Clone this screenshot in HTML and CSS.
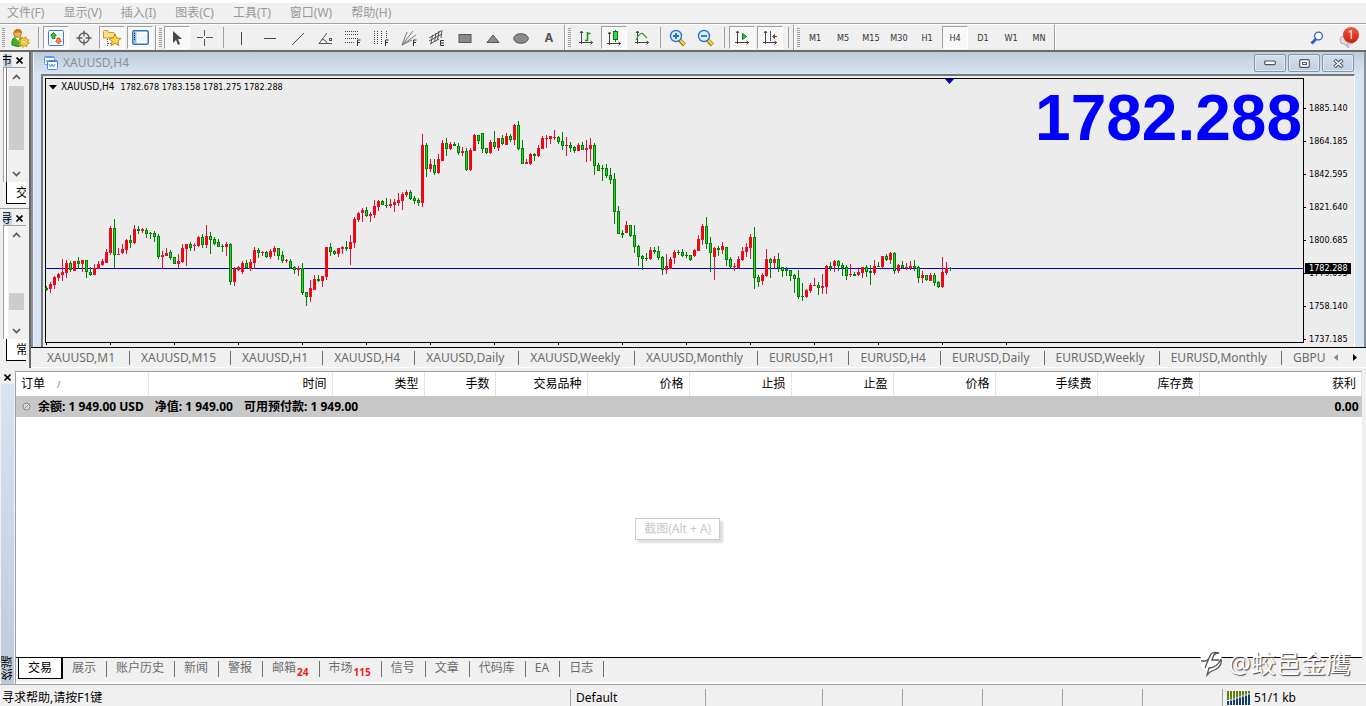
FILE: index.html
```html
<!DOCTYPE html>
<html lang="zh-CN">
<head>
<meta charset="utf-8">
<title>XAUUSD,H4</title>
<link rel="stylesheet" href="styles.css">
</head>
<body>
<nav class="menubar">
  <button>文件(F)</button><button>显示(V)</button><button>插入(I)</button><button>图表(C)</button><button>工具(T)</button><button>窗口(W)</button><button>帮助(H)</button>
</nav>

<header class="toolbar">
  <div class="group">
    <i class="grip"></i>
    <button class="tool" aria-label="新账户"><svg width="20" height="20" viewBox="0 0 20 20"><path d="M2 17q-1-8 5-8t6 5v3q-5 3-11 0z" fill="#3fae2a" stroke="#2a8a18"/><path d="M5 9l3 4 2-4z" fill="#fff"/><circle cx="7.500" cy="5.500" r="3.800" fill="#f2b84b" stroke="#b87416"/><path d="M4 5q0-4 4-4t4 4q-4-1-8 0z" fill="#c47a1c"/><circle cx="14" cy="14" r="4" fill="#f7d84a" stroke="#c99a12"/><circle cx="14" cy="14" r="4.700" fill="none" stroke="#dcae20" stroke-width="2" stroke-dasharray="2 1.700"/><circle cx="14" cy="14" r="1.500" fill="#fff" stroke="#b8860b" stroke-width=".6"/></svg></button>
    <i class="sep"></i>
    <button class="tool on" aria-label="市场报价"><svg width="16" height="16" viewBox="0 0 16 16"><rect x=".5" y=".5" width="15" height="15" rx="1" fill="#fff" stroke="#3b7fc4"/><path d="M9 4h5M10 6h4M2 10h4M2 12h5" stroke="#cfe2f5"/><path d="M5.500 2.500l3 3H7v3H4v-3H2.500z" fill="#3fc046" stroke="#0b7a16" stroke-width=".8"/><path d="M10.500 14l-3-3H9V8h3v3h1.500z" fill="#f58a5a" stroke="#cc3f10" stroke-width=".8"/></svg></button>
    <button class="tool" aria-label="数据窗口"><svg width="16" height="16" viewBox="0 0 16 16"><g fill="none" stroke="#5c5c5c" stroke-width="1.300"><circle cx="8" cy="8" r="5"/><path d="M8 .5v6M8 9.500v6M.5 8h6M9.500 8h6"/></g></svg></button>
    <button class="tool on" aria-label="导航"><svg width="20" height="18" viewBox="0 0 20 18"><path d="M1.500 9V2.500q0-1 1-1h3l1 2h5q1 0 1 1V9z" fill="#f9e08a" stroke="#c9981c"/><path d="M5.500 10v7M6 14.500h4" stroke="#444" stroke-dasharray="1 1"/><path d="M13 5l1.800 4 4.200.4-3.200 2.900 1 4.200-3.800-2.200-3.800 2.200 1-4.200L7 9.400l4.200-.4z" fill="#ffd94d" stroke="#b8860b"/></svg></button>
    <button class="tool on" aria-label="终端"><svg width="17" height="15" viewBox="0 0 17 15"><rect x=".8" y=".8" width="15.400" height="13.400" rx="1.500" fill="#fff" stroke="#2e6fb8" stroke-width="1.500"/><rect x="2" y="2" width="2.500" height="11" fill="#8cbcf0"/><path d="M2.500 3v8" stroke="#123" stroke-dasharray="1 1"/><path d="M6 4h9M6 6h9M6 8h9M6 10h9" stroke="#dfeafa"/></svg></button>
  </div>
  <div class="group">
    <i class="grip"></i>
    <button class="tool on" aria-label="光标"><svg width="12" height="16" viewBox="0 0 12 16"><path d="M2 1v12l3-3 2 5 2-1-2-5h4z" fill="#4a4a4a"/></svg></button>
    <button class="tool" aria-label="十字准线"><svg width="16" height="16" viewBox="0 0 16 16"><path d="M7.500 0v6M7.500 9v7M0 7.500h6M9 7.500h7" stroke="#555"/></svg></button>
    <i class="sep"></i>
    <button class="tool" aria-label="垂直线"><svg width="16" height="16" viewBox="0 0 16 16"><path d="M8.500 2v13" stroke="#444"/></svg></button>
    <button class="tool" aria-label="水平线"><svg width="16" height="16" viewBox="0 0 16 16"><path d="M3 8.500h12" stroke="#444"/></svg></button>
    <button class="tool" aria-label="趋势线"><svg width="16" height="16" viewBox="0 0 16 16"><path d="M3 15L15 3" stroke="#555"/></svg></button>
    <button class="tool" aria-label="角度线"><svg width="16" height="16" viewBox="0 0 16 16"><path d="M10 3L2 13.500h13M5 9q4 1 5 4" fill="none" stroke="#555"/><rect x="12.500" y="8.500" width="2" height="2" fill="none" stroke="#555"/></svg></button>
    <button class="tool" aria-label="斐波那契回调"><svg width="16" height="18" viewBox="0 0 16 18"><path d="M0 2.500h14M0 5.500h14M0 9.500h14M0 13.500h10" stroke="#444" stroke-dasharray="1 1"/><path d="M12.500 17v-6h3M12 13.500h3" fill="none" stroke="#333"/></svg></button>
    <button class="tool" aria-label="斐波那契时区"><svg width="16" height="18" viewBox="0 0 16 18"><path d="M1.500 2v14M4.500 2v14M8.500 2v14M13.500 2v8" stroke="#444" stroke-dasharray="1 1"/><path d="M12.500 17v-6h3M12 13.500h3" fill="none" stroke="#333"/></svg></button>
    <button class="tool" aria-label="斐波那契扇形"><svg width="16" height="18" viewBox="0 0 16 18"><path d="M1 16L6 3M1 16L12 2M1 16L15 6M1 16L11 11" stroke="#777"/><path d="M12.500 17v-6h3M12 13.500h3" fill="none" stroke="#333"/></svg></button>
    <button class="tool" aria-label="等距通道"><svg width="18" height="18" viewBox="0 0 18 18"><path d="M1 9L13 2M1 12L14 5M2 15L11 10M4.500 6L3 15M8 4L6.500 13M11 2L9.500 11M14 1L13 9" stroke="#555"/><path d="M16 11.500h-3.500v5H16M13 14h3" fill="none" stroke="#333"/></svg></button>
    <button class="tool" aria-label="矩形"><svg width="16" height="16" viewBox="0 0 16 16"><rect x="2" y="4.500" width="12" height="8" fill="#8a8a8a" stroke="#555"/></svg></button>
    <button class="tool" aria-label="三角形"><svg width="16" height="16" viewBox="0 0 16 16"><path d="M2 12.500h12L8 5z" fill="#8a8a8a" stroke="#555"/></svg></button>
    <button class="tool" aria-label="椭圆"><svg width="18" height="16" viewBox="0 0 18 16"><ellipse cx="9" cy="8.500" rx="7.300" ry="4.800" fill="#8a8a8a" stroke="#555"/></svg></button>
    <button class="tool letter">A</button>
  </div>
  <div class="group">
    <i class="grip"></i>
    <button class="tool" aria-label="柱状图"><svg width="16" height="16" viewBox="0 0 16 16"><path d="M3.500 1v13M1 12.500h14M2 3l1.500-2L5 3M12.500 11l2 1.500-2 2" fill="none" stroke="#444"/><path d="M7 10.500h2.500V2M9.500 3.500h3" fill="none" stroke="#129a18" stroke-width="1.600"/></svg></button>
    <button class="tool on" aria-label="蜡烛图"><svg width="16" height="18" viewBox="0 0 16 18"><path d="M3.500 3v13M1 14.500h14M2 5l1.500-2L5 5M12.500 13l2 1.500-2 2" fill="none" stroke="#444"/><path d="M9.500 1v12" stroke="#087c10"/><rect x="7.500" y="2.500" width="4" height="8" fill="#39d746" stroke="#087c10"/></svg></button>
    <button class="tool" aria-label="折线图"><svg width="16" height="16" viewBox="0 0 16 16"><path d="M3.500 1v13M1 12.500h14M2 3l1.500-2L5 3M12.500 11l2 1.500-2 2" fill="none" stroke="#444"/><path d="M2 10Q7 0 10 5l3 3" fill="none" stroke="#3a9a40" stroke-width="1.300"/></svg></button>
    <i class="sep"></i>
    <button class="tool" aria-label="放大"><svg width="18" height="18" viewBox="0 0 18 18"><path d="M10.500 11l5 5" stroke="#a87a10" stroke-width="4"/><path d="M11 11l4.500 4.500" stroke="#f6dc48" stroke-width="2"/><circle cx="7" cy="7" r="5.500" fill="#d8efff" stroke="#2f78bd" stroke-width="1.400"/><path d="M4 7h6M7 4v6" stroke="#2573b5" stroke-width="1.800"/></svg></button>
    <button class="tool" aria-label="缩小"><svg width="18" height="18" viewBox="0 0 18 18"><path d="M10.500 11l5 5" stroke="#a87a10" stroke-width="4"/><path d="M11 11l4.500 4.500" stroke="#f6dc48" stroke-width="2"/><circle cx="7" cy="7" r="5.500" fill="#d8efff" stroke="#2f78bd" stroke-width="1.400"/><path d="M4 7h6" stroke="#2573b5" stroke-width="1.800"/></svg></button>
    <i class="sep"></i>
    <button class="tool on" aria-label="自动滚动"><svg width="16" height="16" viewBox="0 0 16 16"><path d="M3.500 1v13M1 12.500h14M2 3l1.500-2L5 3M12.500 11l2 1.500-2 2" fill="none" stroke="#444"/><path d="M8.500 3.500v6l4-3z" fill="#35c840" stroke="#0c7a14"/></svg></button>
    <button class="tool on" aria-label="图表平移"><svg width="16" height="16" viewBox="0 0 16 16"><path d="M3.500 1v13M1 12.500h14M2 3l1.500-2L5 3M12.500 11l2 1.500-2 2" fill="none" stroke="#444"/><path d="M8.500 1v10" stroke="#1c66a8"/><path d="M15 6.500h-4M12.500 4.500l-2 2 2 2z" fill="#a63310" stroke="#a63310"/></svg></button>
    <i class="sep"></i>
  </div>
  <div class="group">
    <i class="grip"></i>
    <button class="tool">M1</button><button class="tool">M5</button><button class="tool">M15</button><button class="tool">M30</button><button class="tool">H1</button><button class="tool on">H4</button><button class="tool">D1</button><button class="tool">W1</button><button class="tool">MN</button>
  </div>
  <div class="toolbar-end">
    <button class="tool" aria-label="搜索"><svg width="14" height="14" viewBox="0 0 14 14"><path d="M6 8L1.500 12.500" stroke="#2f63c9" stroke-width="3"/><circle cx="8.500" cy="5" r="3.900" fill="#fff" stroke="#2f63c9" stroke-width="1.300"/></svg></button>
    <button class="tool chat" aria-label="消息"><svg width="16" height="14" viewBox="0 0 16 14"><path d="M6 2h6q3 0 3 4t-3 4H8l2 4-5-4Q1 10 1 6t5-4z" fill="#dcdce0" stroke="#aaa"/></svg><span class="badge">1</span></button>
  </div>
</header>

<main class="workspace">
  <aside class="docks">
    <section class="dock">
      <div class="dock-head"><span class="dock-title">市</span><button class="close" aria-label="关闭"><svg width="7" height="7" viewBox="0 0 7 7"><path d="M.5.5l6 6M6.500.5l-6 6" stroke="#000" stroke-width="1.600"/></svg></button></div>
      <div class="dock-body marked">
        <div class="scroll"><svg class="chev" width="9" height="6" viewBox="0 0 9 6"><path d="M1 5l3.500-3.500L8 5" fill="none" stroke="#555" stroke-width="1.600"/></svg><i class="thumb tall"></i><svg class="chev" width="9" height="6" viewBox="0 0 9 6"><path d="M1 1l3.500 3.500L8 1" fill="none" stroke="#555" stroke-width="1.600"/></svg></div>
      </div>
      <div class="dock-tab">交</div>
    </section>
    <section class="dock">
      <div class="dock-head"><span class="dock-title">导</span><button class="close" aria-label="关闭"><svg width="7" height="7" viewBox="0 0 7 7"><path d="M.5.5l6 6M6.500.5l-6 6" stroke="#000" stroke-width="1.600"/></svg></button></div>
      <div class="dock-body">
        <div class="scroll"><svg class="chev" width="9" height="6" viewBox="0 0 9 6"><path d="M1 5l3.500-3.500L8 5" fill="none" stroke="#555" stroke-width="1.600"/></svg><i class="thumb low"></i><svg class="chev" width="9" height="6" viewBox="0 0 9 6"><path d="M1 1l3.500 3.500L8 1" fill="none" stroke="#555" stroke-width="1.600"/></svg></div>
      </div>
      <div class="dock-tab">常</div>
    </section>
  </aside>
  <div class="charts">
    <section class="mdi">
      <div class="window">
        <div class="titlebar">
          <svg width="14" height="14" viewBox="0 0 14 14"><rect x=".5" y=".5" width="10" height="8" rx="1" fill="#fff" stroke="#5b9ae6"/><path d="M1 1.500h9" stroke="#5b9ae6"/><path d="M2 6l1.500-2 1.500 2 1.500-2" fill="none" stroke="#5b9ae6"/><rect x="3.500" y="4.500" width="10" height="9" rx="1" fill="#fff" stroke="#3f86dc"/><path d="M4 5.500h9" stroke="#3f86dc"/><path d="M5 8l1.500 3L8 8l1.500 3L11 8" fill="none" stroke="#3f86dc"/></svg>
          <span class="title">XAUUSD,H4</span>
          <button class="winbtn" aria-label="最小化"><svg width="12" height="6" viewBox="0 0 12 6"><rect x=".7" y="1" width="10.600" height="3.600" rx="1" fill="#fff" stroke="#4c5666" stroke-width="1.200"/></svg></button>
          <button class="winbtn" aria-label="还原"><svg width="11" height="9" viewBox="0 0 11 9"><rect x=".7" y=".7" width="9.600" height="7.600" rx="1" fill="#fff" stroke="#4c5666" stroke-width="1.200"/><rect x="3.500" y="3.500" width="4" height="2" fill="none" stroke="#4c5666"/></svg></button>
          <button class="winbtn" aria-label="关闭窗口"><svg width="11" height="9" viewBox="0 0 11 9"><path d="M1.500 1l8 7M9.500 1l-8 7" stroke="#4c5666" stroke-width="3.600"/><path d="M2 1.500l7 6M9 1.500l-7 6" stroke="#fff" stroke-width="1.600"/></svg></button>
        </div>
        <div class="view">
          <div class="plot">
            <svg class="candles" id="candles"></svg>
            <div class="quote"><svg width="8" height="5" viewBox="0 0 8 5"><path d="M0 0h8L4 4.500z"/></svg><span class="symbol">XAUUSD,H4</span><span>1782.678 1783.158 1781.275 1782.288</span></div>
            <div class="price">1782.288</div>
          </div>
          <div class="axis">
            <span>1885.140</span><span>1864.185</span><span>1842.595</span><span>1821.640</span><span>1800.685</span><span>1779.095</span><span>1758.140</span><span>1737.185</span>
            <b class="tag">1782.288</b>
          </div>
        </div>
      </div>
    </section>
    <nav class="chart-tabs">
      <div class="strip">
        <button>XAUUSD,M1</button><button>XAUUSD,M15</button><button>XAUUSD,H1</button><button>XAUUSD,H4</button><button>XAUUSD,Daily</button><button>XAUUSD,Weekly</button><button>XAUUSD,Monthly</button><button>EURUSD,H1</button><button>EURUSD,H4</button><button>EURUSD,Daily</button><button>EURUSD,Weekly</button><button>EURUSD,Monthly</button><button>GBPU</button>
      </div>
      <button class="arrow" aria-label="向左"><svg width="4" height="7" viewBox="0 0 4 7"><path d="M4 0v7L0 3.500z" fill="#888"/></svg></button>
      <button class="arrow" aria-label="向右"><svg width="4" height="7" viewBox="0 0 4 7"><path d="M0 0v7l4-3.500z" fill="#000"/></svg></button>
    </nav>
  </div>
</main>

<section class="terminal">
  <div class="side">
    <button class="close" aria-label="关闭终端"><svg width="7" height="7" viewBox="0 0 7 7"><path d="M.5.5l6 6M6.500.5l-6 6" stroke="#000" stroke-width="1.600"/></svg></button>
    <div class="side-title"><span>终端</span></div>
  </div>
  <div class="panel">
    <div class="sheet">
      <table class="orders">
        <colgroup><col class="c-order"><col class="c-time"><col class="c-type"><col class="c-lots"><col class="c-type"><col class="c-num"><col class="c-num"><col class="c-num"><col class="c-num"><col class="c-num"><col class="c-num"><col></colgroup>
        <thead><tr><th class="first">订单<span class="sort">/</span></th><th>时间</th><th>类型</th><th>手数</th><th>交易品种</th><th>价格</th><th>止损</th><th>止盈</th><th>价格</th><th>手续费</th><th>库存费</th><th>获利</th></tr></thead>
        <tbody><tr><td colspan="11"><div class="balance"><svg width="9" height="9" viewBox="0 0 9 9"><circle cx="4.500" cy="4.500" r="3.500" fill="#ddd" stroke="#888"/><path d="M2.500 6.500l4-4" stroke="#888"/></svg><span>余额: 1 949.00 USD</span><span>净值: 1 949.00</span><span>可用预付款: 1 949.00</span></div></td><td class="profit">0.00</td></tr></tbody>
      </table>
      <div class="hint">截图(Alt + A)</div>
    </div>
    <nav class="term-tabs">
      <button class="active">交易</button><button>展示</button><button>账户历史</button><button>新闻</button><button>警报</button><button>邮箱<sub>24</sub></button><button>市场<sub>115</sub></button><button>信号</button><button>文章</button><button>代码库</button><button>EA</button><button>日志</button>
    </nav>
  </div>
  <div class="watermark"><svg width="26" height="28" viewBox="0 0 26 28"><circle cx="13" cy="12" r="11" fill="#fff"/><path d="M3 12h4q3 0 5-5 2-5 9-3-5 0-6 4l-1 3h7M7 19l4-10M23 10q2 9-11 13l-3 3 2-7q8 0 12-9" fill="none" stroke="#555" stroke-width="1.300"/></svg><span>@蛟邑金鹰</span></div>
</section>

<footer class="status">
  <span class="help">寻求帮助,请按F1键</span>
  <span class="s1">Default</span><span class="s2"></span><span class="s3"></span><span class="s3"></span><span class="s3"></span><span class="s3"></span><span class="s3"></span>
  <span class="net"><svg width="24" height="14" viewBox="0 0 24 14"><path d="M1 0v9M4 0v8.500M7 0v7.500M10 0v6.500M13 0v5.500M16 0v4.500M19 0v3.500M22 0v2.500" stroke="#657c10" stroke-width="2"/><path d="M1 14v-4M4 14v-4.500M7 14v-5.500M10 14V7.500M13 14V6.500M16 14V5.500M19 14V4.500M22 14V3.500" stroke="#123f63" stroke-width="2"/></svg>51/1 kb</span>
</footer>
<script src="chart.js"></script>
</body>
</html>
```

FILE: styles.css
```css
* { box-sizing: border-box; }
body {
  margin: 0;
  height: 100vh;
  display: flex;
  flex-direction: column;
  overflow: hidden;
  background: #f0f0f0;
  border-top: 3px solid #fff;
  font: 12px/16px "Noto Sans", "Noto Sans CJK SC", sans-serif;
  color: #000;
}
button {
  font: inherit;
  color: inherit;
  background: none;
  border: 0;
  padding: 0;
  margin: 0;
}
svg { display: block; flex: none; }

.menubar {
  display: flex;
  height: 21px;
  flex: none;
  border-bottom: 1px solid #a0a0a0;
  color: #999;
}
.menubar button { padding: 0 12px 0 7px; }

.toolbar {
  display: flex;
  flex: none;
  height: 28px;
  border-top: 1px solid #fff;
  border-bottom: 2px solid #696969;
}
.group {
  display: flex;
  gap: 2px;
  align-items: center;
  padding: 0 2px;
  border-right: 1px solid #a0a0a0;
  box-shadow: 1px 0 #fff;
  margin-right: 1px;
}
.grip {
  width: 3px;
  height: 19px;
  background: repeating-linear-gradient(#a0a0a0 0 1px, #f0f0f0 1px 2px);
}
.sep { width: 6px; height: 21px; background: linear-gradient(90deg, #f0f0f0 3px, #a0a0a0 3px 4px, #f0f0f0 4px); }
.tool {
  width: 26px;
  height: 23px;
  display: flex;
  align-items: center;
  justify-content: center;
  font: 9px/12px "DejaVu Sans Condensed", sans-serif;
  color: #333;
  border: 1px solid transparent;
}
.tool.on {
  background: #f8f8f8;
  border-color: #a0a0a0 #fff #fff #a0a0a0;
}
.letter { font: bold 12px/14px "Noto Sans", sans-serif; color: #555; }
.toolbar-end { margin-left: auto; display: flex; align-items: center; gap: 4px; padding-right: 6px; }
.chat { position: relative; padding-top: 7px; }
.badge {
  position: absolute;
  right: 0;
  top: 0;
  width: 16px;
  height: 16px;
  border-radius: 8px;
  background: linear-gradient(#ee5a3c, #d01c0c);
  color: #fff;
  font: 12px/16px "Noto Sans", sans-serif;
  text-align: center;
}

.workspace { display: flex; flex: none; height: 316px; }
.docks { width: 29px; flex: none; display: flex; flex-direction: column; }
.dock { display: flex; flex-direction: column; height: 157px; padding: 1px 3px 4px; border-bottom: 1px solid #a0a0a0; }
.dock + .dock { height: 154px; margin-top: 2px; padding-top: 0; border-bottom: 0; }
.dock-head { display: flex; justify-content: space-between; align-items: center; height: 14px; padding-right: 3px; }
.dock-title { width: 9px; height: 13px; overflow: hidden; background: #c8d6e4; line-height: 13px; direction: rtl; }
.close { display: flex; align-items: center; justify-content: center; }
.dock-body { flex: 1; display: flex; justify-content: flex-end; background: #fff; border: 1px solid #a0a0a0; border-width: 1px 0 0 1px; }
.marked { background: linear-gradient(90deg, #fff 2px, #787878 2px 3px, #fff 3px); }
.scroll { width: 18px; background: #f0f0f0; display: flex; flex-direction: column; align-items: center; justify-content: space-between; padding: 6px 2px 5px 1px; }
.thumb { width: 15px; background: #cdcdcd; }
.tall { height: 64px; margin: 0 0 16px; }
.low { height: 17px; margin: 36px 0 0; }
.dock-tab { height: 22px; margin-left: 3px; padding-left: 9px; background: #fff; border: 1px solid #000; border-width: 0 0 1px 1px; overflow: hidden; line-height: 22px; white-space: nowrap; }

.charts { flex: 1; min-width: 0; display: flex; flex-direction: column; border-left: 2px solid #696969; }
.mdi { flex: 1; min-height: 0; background: #8b8f96; padding: 0 2px 0 2px; border-bottom: 1px solid #000; }
.window { height: 100%; display: flex; flex-direction: column; background: #d7e4f2; padding: 0 9px 0 8px; border-left: 1px solid #e8f0f8; }
.titlebar { height: 22px; flex: none; display: flex; align-items: center; gap: 2px; margin: 0 -9px 0 -8px; padding: 0 10px 0 10px; background: linear-gradient(#bfcddb, #d7e4f2); color: #8c9096; }
.title { flex: 1; margin-left: 3px; }
.winbtn { width: 32px; height: 18px; display: flex; align-items: center; justify-content: center; border: 1px solid #8496ae; border-radius: 2px; background: linear-gradient(#d4dfea, #c0cfdf); box-shadow: inset 0 0 0 1px #dfe9f3; }
.view { flex: 1; min-height: 0; display: flex; background: #ececec; border: 2px solid #787878; border-right: 1px solid #fff; border-bottom: 0; padding: 2px 0 0 2px; margin-left: -1px; }
.plot { flex: 1; min-width: 0; position: relative; height: 265px; border: 1px solid #000; }
.candles { position: absolute; left: -1px; top: -1px; width: calc(100% + 2px); height: 269px; }
.quote { position: relative; display: flex; align-items: center; gap: 4px; padding: 2px 3px; font: 9px/12px "DejaVu Sans Condensed", sans-serif; }
.symbol { font-size: 10px; margin-right: 2px; }
.price { position: absolute; right: 1px; top: 3px; font: bold 64px/72px "Liberation Sans", sans-serif; color: #00f; }
.axis { position: relative; width: 50px; padding-top: 14px; display: flex; flex-direction: column; font: 9px/33px "DejaVu Sans Condensed", sans-serif; }
.axis span { height: 33px; display: flex; align-items: center; }
.axis span::before { content: ""; width: 2px; height: 1px; background: #000; margin-right: 3px; }
.tag { position: absolute; left: 1px; top: 185px; width: 46px; height: 11px; padding-left: 4px; background: #000; color: #fff; font-weight: normal; line-height: 11px; }

.chart-tabs { height: 20px; flex: none; display: flex; align-items: center; color: #6d6d6d; border-bottom: 1px solid #fff; padding: 0 2px 0 5px; }
.strip { flex: 1; min-width: 0; display: flex; overflow: hidden; }
.strip button { flex: none; height: 14px; line-height: 14px; padding: 0 14px 0 11px; border-right: 1px solid #6d6d6d; }
.strip button:last-child { border: 0; padding-right: 0; }
.arrow { width: 19px; display: flex; justify-content: center; }

.terminal { flex: 1; min-height: 0; display: flex; position: relative; margin-top: 3px; padding-right: 4px; }
.side { width: 15px; flex: none; display: flex; flex-direction: column; }
.side .close { height: 12px; }
.side-title { flex: 1; margin: 1px 1px 0; background: linear-gradient(#d7e4f2, #bccbdc); display: flex; flex-direction: column; justify-content: flex-end; align-items: center; }
.side-title span { writing-mode: vertical-rl; transform: rotate(180deg); line-height: 13px; margin-bottom: 4px; }
.panel { flex: 1; min-width: 0; display: flex; flex-direction: column; border: 1px solid #a0a0a0; border-width: 1px 0 0 1px; }
.sheet { flex: 1; min-height: 0; position: relative; background: #fff; border-bottom: 1px solid #000; }
.orders { width: 100%; table-layout: fixed; border-collapse: collapse; }
.c-order { width: 132px; } .c-time { width: 184px; } .c-type { width: 92px; } .c-lots { width: 71px; } .c-num { width: 102px; }
.orders th { height: 24px; padding: 0 5px; text-align: right; font-weight: normal; border-right: 1px solid #e5e5e5; }
.orders .first { text-align: left; }
.sort { margin-left: 12px; color: #777; font-size: 9px; }
.orders td { height: 21px; padding: 0 4px 0 6px; background: #c8c8c8; font-weight: bold; }
.balance { display: flex; align-items: center; gap: 11px; }
.balance svg { margin-right: -4px; }
.orders .profit { text-align: right; padding-right: 3px; }
.hint { position: absolute; left: 46%; top: 146px; border: 1px solid #ccc; background: #fff; color: #c8c8c8; line-height: 20px; padding: 0 8px; box-shadow: 3px 3px 2px #ddd; }
.term-tabs { height: 26px; flex: none; display: flex; align-items: flex-start; padding-left: 2px; color: #6d6d6d; }
.term-tabs button { display: flex; height: 16px; line-height: 14px; margin-top: 3px; padding: 0 10px 0 9px; border-right: 1px solid #6d6d6d; }
.term-tabs .active { height: 22px; margin-top: -1px; line-height: 22px; background: #fff; color: #000; padding: 0 9px; border: solid #000; border-width: 0 2px 1px 1px; }
.term-tabs sub { font: bold 10px/12px "Noto Sans", sans-serif; color: #e82020; padding: 5px 0 0 1px; }
.watermark { position: absolute; right: 15px; bottom: 5px; display: flex; align-items: center; gap: 5px; color: #fff; font-size: 25px; line-height: 32px; text-shadow: 1px 1px 1px #444; }

.status { height: 22px; flex: none; display: flex; align-items: center; border-top: 1px solid #a0a0a0; box-shadow: 0 -2px #fff; padding: 4px 0 0 2px; }
.status span { flex: none; height: 17px; line-height: 17px; border-left: 1px solid #a0a0a0; padding-left: 5px; }
.status .help { flex: 1; border: 0; padding: 0; }
.s1 { width: 135px; } .s2 { width: 117px; } .s3 { width: 80px; }
.status .net { width: 144px; display: flex; align-items: center; gap: 3px; padding-left: 4px; }
```

FILE: chart.js
```js
// Bars: direction (g = down, r = up), wick top, body top, body bottom, wick bottom.
const bars = `g286,288,290,291 r282,284,289,293 r276,277,285,289 r273,274,278,281 r259,272,275,281 r260,263,273,278 g261,263,270,272 r261,261,271,271 g257,261,264,269 r260,260,264,272
g260,260,272,278 g267,272,275,276 r264,268,275,275 r261,264,269,269 r259,261,265,266 r249,252,263,263 r226,228,253,255 g219,228,255,268 r248,254,255,255 r244,249,253,254
r239,240,250,254 g235,240,243,248 r225,229,243,244 g226,229,231,234 r228,229,231,233 g228,230,234,238 g232,233,234,239 g231,233,237,242 g234,236,257,259 r251,255,257,269
r248,253,256,256 g250,252,258,260 g257,257,264,264 r254,261,264,268 r244,248,262,263 r244,244,249,266 g242,244,248,251 r243,245,246,251 r236,237,246,247 g234,237,245,248
r225,236,245,248 g232,236,240,254 g237,239,244,245 g239,242,247,247 g244,246,247,252 r242,244,247,256 g243,244,282,285 r267,269,282,286 r266,267,270,271 r261,263,272,274
g260,263,268,269 r259,262,269,271 r247,250,263,269 g248,250,253,258 r251,252,253,256 g251,252,257,258 r249,251,257,259 r246,248,252,256 g248,248,256,260 g251,255,261,263
r259,260,261,263 g259,261,268,269 g266,267,270,274 r266,268,270,276 g263,268,293,295 g292,292,297,306 r280,288,297,302 r275,279,290,290 g275,279,281,282 r276,276,281,287
r247,247,277,280 g243,247,252,256 g250,251,254,255 r248,248,254,257 r246,247,249,254 g241,247,249,251 r235,242,249,265 r217,219,243,248 r212,213,220,222 r208,210,213,222
g207,210,216,217 r212,214,216,222 r200,206,215,218 r200,201,207,211 g200,201,205,205 g198,205,206,208 r199,204,206,208 r199,202,205,212 r193,200,203,206 r192,194,201,210
r190,192,195,197 g190,192,199,200 g196,198,201,204 g198,200,203,206 r134,145,203,207 g143,145,169,177 r159,164,169,172 g159,165,173,175 r154,159,173,174 r140,143,161,161
g138,143,149,156 r142,144,149,150 g142,144,146,146 g143,146,153,155 r147,151,153,156 g148,151,170,171 r148,150,170,171 r134,135,151,151 g135,135,141,144 g133,133,149,153
g148,148,153,154 r140,142,153,154 g131,142,147,149 r138,138,148,151 g135,138,144,145 r133,136,145,145 g134,136,140,142 r124,125,140,145 g121,125,149,150 g140,148,164,164
r159,162,164,164 r153,154,164,165 g153,154,156,161 r145,148,156,157 r136,138,149,149 r135,138,139,148 r136,136,139,144 r130,137,138,140 g136,137,142,144 g132,141,146,150
r137,145,146,156 g142,145,148,152 g146,147,151,153 r143,145,151,151 g142,145,150,150 r140,148,150,162 r138,145,149,161 g143,145,166,175 g163,165,171,171 g165,168,169,181
g164,168,176,178 g168,175,180,184 g173,179,212,224 g206,211,234,234 g230,233,235,238 r221,225,233,233 g225,225,236,237 g225,235,247,253 g245,246,257,266 g255,256,259,270
g253,258,259,261 r247,250,259,260 g247,250,252,254 g246,251,258,260 g256,257,270,275 r254,266,270,274 r257,259,269,269 r250,252,258,264 g250,252,253,255 g249,252,256,257
g252,255,256,258 g255,255,260,261 r249,250,256,257 r235,239,251,251 r224,226,240,245 g217,226,244,249 g237,243,253,272 r247,248,257,280 g246,248,250,256 r242,246,250,254
g247,247,260,266 g257,259,267,269 r263,266,267,271 r256,259,268,269 r247,251,260,261 r243,247,252,257 r234,237,248,259 g227,237,278,289 g275,277,282,287 r273,275,281,285
r249,259,276,277 g258,259,263,278 r256,259,263,268 g253,259,268,272 g267,267,271,277 g267,269,271,276 g270,270,276,281 g274,275,279,293 g270,278,297,299 g283,296,297,301
r289,290,297,298 r283,285,291,293 r278,285,286,286 g282,285,288,295 r274,286,288,294 r265,266,287,294 g262,266,268,271 r260,261,266,272 g260,261,266,271 g263,265,268,276
g265,267,276,280 r264,274,275,277 g272,274,276,276 r269,272,275,276 r267,267,273,278 g265,267,272,277 g265,271,273,285 r260,266,273,275 g262,266,267,267 r256,256,267,268
g254,256,260,261 r252,253,260,264 g252,253,271,274 r264,265,271,273 g261,265,268,269 r263,267,268,270 r261,266,268,270 g260,266,268,271 g266,267,278,283 r271,275,278,283
g275,275,280,281 r273,275,281,281 g273,275,283,286 g281,282,287,288 r257,272,287,288 r262,268,273,275 g267,268,269,271`.split(/\s+/);

const TOP = 78;
const STEP = 4;
const styles = { g: ['#008000', '#32cd32', 1], r: ['#dc143c', '#ff0000', 2] };
const rect = (x, y, w, h, fill) => `<rect x="${x}" y="${y}" width="${w}" height="${h}" fill="${fill}"/>`;

let out = rect(1, 268 - TOP, '100%', 1, '#0000cd');
bars.forEach((bar, i) => {
  const [edge, fill, inner] = styles[bar[0]];
  const [high, top, bottom, low] = bar.slice(1).split(',').map(n => n - TOP);
  const x = 1 + i * STEP;
  out += rect(x, high, 1, Math.max(1, low - high), edge);
  out += rect(x - 1, top, 3, Math.max(1, bottom - top), edge);
  if (bottom - top > 2) out += rect(x, top + 1, inner, bottom - top - 2, fill);
});
for (let x = 1; x < 1000; x += 64) out += rect(x, 265, 1, 2, '#000');
out += '<path d="M900 1h9l-4.500 5z" fill="#0000cd"/>';
document.getElementById('candles').innerHTML = out;
```
